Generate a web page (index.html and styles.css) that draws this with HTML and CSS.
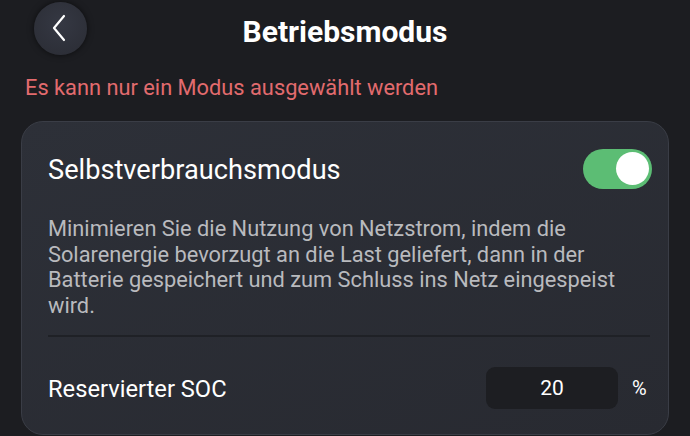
FILE: index.html
```html
<!DOCTYPE html>
<html>
   <head>
      <meta charset="UTF-8">
      <meta name="viewport" content="width=device-width, initial-scale=1.0">
      <title>Betriebsmodus</title>
      <link rel="stylesheet" href="styles.css">
   </head>
   <body>
      <div class="topbar">
         <button class="back">
            <svg width="14" height="28" viewBox="0 0 14 28"><path d="M12 2 L2 14 L12 26" fill="none" stroke="#fff" stroke-width="2.2" stroke-linecap="round" stroke-linejoin="round"/></svg>
         </button>
         <h1 class="title">Betriebsmodus</h1>
      </div>
      <p class="hint">Es kann nur ein Modus ausgewählt werden</p>
      <div class="card">
         <div class="card-head">
            <span class="mode">Selbstverbrauchsmodus</span>
            <span class="toggle"><span class="knob"></span></span>
         </div>
         <p class="desc">Minimieren Sie die Nutzung von Netzstrom, indem die Solarenergie bevorzugt an die Last geliefert, dann in der Batterie gespeichert und zum Schluss ins Netz eingespeist wird.</p>
         <div class="divider"></div>
         <div class="row">
            <span class="label">Reservierter SOC</span>
            <span class="field">20</span>
            <span class="unit">%</span>
         </div>
      </div>
   </body>
</html>
```
FILE: styles.css
```css
body
{
   margin: 0;
   padding: 0;
   background-color: #1c1d21;
   font-family: Roboto, "Liberation Sans", sans-serif;
   color: #fff;
   height: 436px;
   overflow: hidden;
}
.topbar
{
   display: flex;
   align-items: center;
   height: 58px;
   padding-left: 34px;
}
.back
{
   width: 53px;
   height: 53px;
   border-radius: 50%;
   border: 0;
   background: radial-gradient(circle at 50% 40%, #353843, #2a2c34);
   box-shadow: 0 0 6px rgba(0,0,0,0.6);
   display: flex;
   align-items: center;
   justify-content: center;
   padding: 0 4px 0 0;
   margin-top: -2px;
}
.title
{
   flex: 1;
   text-align: center;
   margin: 0;
   padding-right: 87px;
   font-size: 30px;
   font-weight: 700;
   padding-top: 4px;
}
.hint
{
   margin: 17px 0 0 25px;
   font-size: 21.8px;
   color: #e26b6e;
   line-height: 26px;
}
.card
{
   margin: 20px 21px 0 21px;
   height: 314px;
   box-sizing: border-box;
   border-radius: 22px;
   background: linear-gradient(160deg, #2d3038, #282a31);
   border: 1px solid #3a3d46;
   padding: 0 16px 0 26px;
}
.card-head
{
   display: flex;
   align-items: center;
   justify-content: space-between;
   height: 94px;
}
.mode
{
   font-size: 27.2px;
   color: #fff;
   padding-top: 1px;
}
.toggle
{
   width: 69px;
   height: 40px;
   border-radius: 20px;
   background-color: #5cbd74;
   display: flex;
   align-items: center;
   justify-content: flex-end;
   padding-right: 3px;
   box-sizing: border-box;
   margin-top: -1px;
}
.knob
{
   width: 33px;
   height: 33px;
   border-radius: 50%;
   background-color: #fff;
}
.desc
{
   margin: 0;
   font-size: 21.8px;
   line-height: 25.5px;
   color: #b9babe;
   max-width: 590px;
}
.divider
{
   height: 2px;
   background-color: #1f2126;
   margin: 17px 2px 0 0;
}
.row
{
   display: flex;
   align-items: center;
   height: 102px;
}
.label
{
   flex: 1;
   font-size: 23.7px;
   padding-top: 1px;
}
.field
{
   width: 132px;
   height: 42px;
   border-radius: 9px;
   background-color: #1d1e22;
   display: flex;
   align-items: center;
   justify-content: center;
   font-size: 21px;
   margin-right: 14px;
}
.unit
{
   font-size: 20px;
   width: 20px;
   text-align: left;
}
```
